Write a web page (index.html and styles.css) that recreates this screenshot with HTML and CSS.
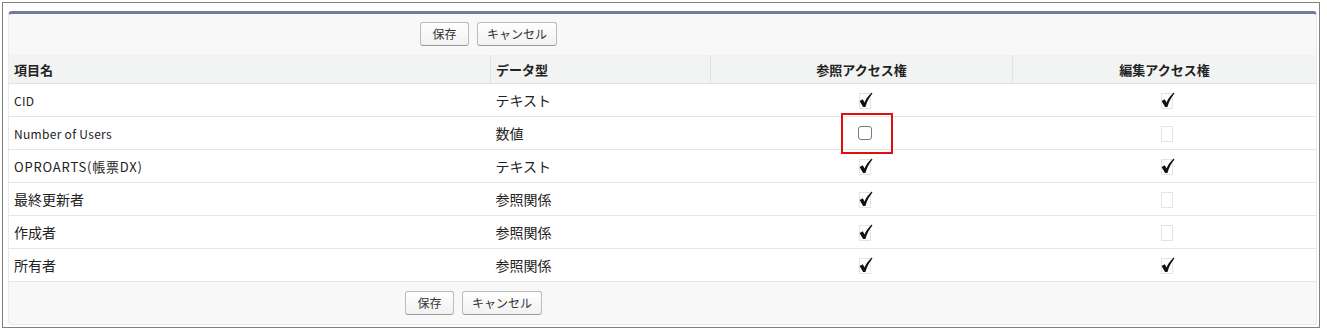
FILE: index.html
```html
<!DOCTYPE html>
<html lang="ja">
<head>
    <meta charset="UTF-8">
    <title>項目レベルセキュリティ</title>
    <link rel="stylesheet" href="styles.css">
</head>
<body>
    <div class="frame">
        <div class="panel">
            <div class="buttons buttons-top">
                <button class="btn btn-save">保存</button>
                <button class="btn">キャンセル</button>
            </div>
            <table class="list">
                <thead>
                    <tr>
                        <th class="col-name">項目名</th>
                        <th class="col-type">データ型</th>
                        <th class="col-read">参照アクセス権</th>
                        <th class="col-edit">編集アクセス権</th>
                    </tr>
                </thead>
                <tbody>
                    <tr>
                        <td class="latin">CID</td>
                        <td>テキスト</td>
                        <td class="center"><span class="check on"></span></td>
                        <td class="center"><span class="check on"></span></td>
                    </tr>
                    <tr>
                        <td class="latin">Number of Users</td>
                        <td>数値</td>
                        <td class="center marked"><span class="red-box"></span><input type="checkbox" class="cb"></td>
                        <td class="center"><span class="check"></span></td>
                    </tr>
                    <tr>
                        <td class="latin wide">OPROARTS(帳票DX)</td>
                        <td>テキスト</td>
                        <td class="center"><span class="check on"></span></td>
                        <td class="center"><span class="check on"></span></td>
                    </tr>
                    <tr>
                        <td>最終更新者</td>
                        <td>参照関係</td>
                        <td class="center"><span class="check on"></span></td>
                        <td class="center"><span class="check"></span></td>
                    </tr>
                    <tr>
                        <td>作成者</td>
                        <td>参照関係</td>
                        <td class="center"><span class="check on"></span></td>
                        <td class="center"><span class="check"></span></td>
                    </tr>
                    <tr>
                        <td>所有者</td>
                        <td>参照関係</td>
                        <td class="center"><span class="check on"></span></td>
                        <td class="center"><span class="check on"></span></td>
                    </tr>
                </tbody>
            </table>
            <div class="buttons buttons-bottom">
                <button class="btn btn-save">保存</button>
                <button class="btn">キャンセル</button>
            </div>
        </div>
    </div>

    <script>
        // draw the check images: dotted placeholder box, plus a tick when granted
        const tick = '<path d="M0.6 9 L3.8 7.3 L5.5 10.4 C7.3 6.6 9.6 3.4 12.8 0.6 L13.4 1.5 C10.6 4.8 8.2 9 6.4 15 L4.1 15 Z" fill="#111"/>';
        document.querySelectorAll('.check').forEach(el => {
            const on = el.classList.contains('on');
            el.innerHTML = '<svg width="14" height="17" viewBox="0 0 14 17">' +
                '<rect x="0.5" y="1.5" width="11" height="15" fill="none" stroke="#c8c8c8" stroke-dasharray="1 1"/>' +
                (on ? tick : '') + '</svg>';
        });
    </script>
</body>
</html>
```

FILE: styles.css
```css
body {
    margin: 0;
    font-family: "Noto Sans CJK JP", "Liberation Sans", sans-serif;
    font-size: 14px;
    color: #222;
    background-color: #fff;
}
.frame {
    margin: 2px;
    width: 1309px;
    padding: 8px 2px 2px 5px;
    border: 1px solid #808080;
}
.panel {
    background-color: #f8f8f8;
    border: 1px solid #eaeaea;
    border-top: 3px solid #6f7c9b;
    border-radius: 4px;
}
.buttons {
    display: flex;
    gap: 8px;
}
.buttons-top {
    height: 41px;
    padding-left: 411px;
    padding-top: 8px;
    box-sizing: border-box;
}
.buttons-bottom {
    height: 42px;
    padding-left: 396px;
    padding-top: 9px;
    box-sizing: border-box;
}
.btn {
    height: 24px;
    padding: 0 9px;
    font-family: inherit;
    font-size: 12px;
    line-height: 20px;
    color: #333;
    background: linear-gradient(#ffffff, #f1f1f1);
    border: 1px solid #bcbcbc;
    border-bottom-color: #9a9a9a;
    border-radius: 3px;
}
.btn-save {
    min-width: 49px;
}
.list {
    width: 100%;
    border-collapse: collapse;
    table-layout: fixed;
    background-color: #fff;
}
.list th {
    height: 28px;
    padding: 0 5px;
    font-size: 13px;
    font-weight: bold;
    text-align: left;
    color: #222;
    background-color: #f2f3f3;
    border-bottom: 1px solid #e0e3e5;
    border-left: 1px solid #e0e3e5;
}
.list th:first-child {
    border-left: none;
}
.list .col-name {
    width: 471px;
}
.list .col-type {
    width: 209px;
}
.list .col-read {
    width: 291px;
    text-align: center;
}
.list .col-edit {
    text-align: center;
}
.list td {
    height: 32px;
    padding: 0 5px;
    border-bottom: 1px solid #e6e6e6;
    vertical-align: middle;
}
.list td.latin {
    font-size: 12px;
    letter-spacing: 0.3px;
}
.list td.wide {
    font-size: 13px;
    letter-spacing: 0.8px;
}
.list td.center {
    text-align: center;
    line-height: 0;
}
.check {
    display: inline-block;
    width: 14px;
    height: 17px;
    margin-left: 8px;
}
.marked {
    position: relative;
}
.red-box {
    position: absolute;
    left: 130px;
    top: -4px;
    width: 48px;
    height: 37px;
    border: 2px solid #e01010;
}
.cb {
    appearance: none;
    width: 14px;
    height: 14px;
    margin: 0 0 0 6px;
    border: 1px solid #7a7a7a;
    border-radius: 3px;
    background-color: #fff;
}
```
